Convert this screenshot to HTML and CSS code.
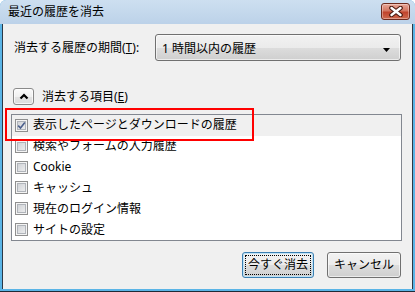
FILE: index.html
```html
<!DOCTYPE html>
<html lang="ja">
<head>
    <meta charset="UTF-8">
    <meta name="viewport" content="width=device-width, initial-scale=1.0">
    <title>最近の履歴を消去</title>

    <link rel="stylesheet" href="styles.css">
</head>
<body>
    <div class="window">
        <div class="titlebar">
            <span class="title">最近の履歴を消去</span>
            <button class="close">
                <svg width="14" height="11" viewBox="0 0 14 11">
                    <path d="M2.5 2 L11.5 9 M11.5 2 L2.5 9" stroke="#4a1a10" stroke-width="4.6" stroke-linecap="round"/>
                    <path d="M2.5 2 L11.5 9 M11.5 2 L2.5 9" stroke="#fff" stroke-width="2.4" stroke-linecap="round"/>
                </svg>
            </button>
        </div>
        <div class="client">
            <div class="period">
                <label>消去する履歴の期間(<u>T</u>):</label>
                <div class="combo">
                    <span>1 時間以内の履歴</span>
                    <svg class="arrow" width="7" height="4" viewBox="0 0 7 4"><path d="M0 0 H7 L3.5 4 Z" fill="#000"/></svg>
                </div>
            </div>
            <div class="items-head">
                <button class="expander">
                    <svg width="10" height="7" viewBox="0 0 10 7"><path d="M1.5 5.5 L5 2 L8.5 5.5" fill="none" stroke="#000" stroke-width="2.2"/></svg>
                </button>
                <span>消去する項目(<u>E</u>)</span>
            </div>
            <div class="list">
                <div class="row selected">
                    <span class="check">
                        <svg width="9" height="9" viewBox="0 0 9 9"><path d="M1.2 4.6 L3.5 7 L7.8 1.6" fill="none" stroke="#4b5f8c" stroke-width="1.6"/></svg>
                    </span>表示したページとダウンロードの履歴
                </div>
                <div class="row"><span class="check"></span>検索やフォームの入力履歴</div>
                <div class="row"><span class="check"></span>Cookie</div>
                <div class="row"><span class="check"></span>キャッシュ</div>
                <div class="row"><span class="check"></span>現在のログイン情報</div>
                <div class="row"><span class="check"></span>サイトの設定</div>
                <div class="highlight"></div>
            </div>
            <div class="footer">
                <button class="button default">今すぐ消去</button>
                <button class="button cancel">キャンセル</button>
            </div>
        </div>
    </div>
</body>
</html>
```

FILE: styles.css
```css
* {
    box-sizing: border-box;
}
body {
    margin: 0;
    background: #fff;
    font-family: "Noto Sans", "Noto Sans CJK JP", sans-serif;
    font-size: 12px;
    color: #000;
}
button {
    font-family: inherit;
    font-size: 12px;
    color: #000;
    margin: 0;
    padding: 0;
}
.window {
    width: 415px;
    height: 292px;
    display: flex;
    flex-direction: column;
    background: #5ab4e6;
    border-bottom: 1px solid #1f2a36;
    border-radius: 6px 6px 0 0;
}
.titlebar {
    height: 24px;
    flex: none;
    display: flex;
    align-items: center;
    padding: 0 5px 0 8px;
    background: linear-gradient(#cddff0, #bcd2e9);
    border-radius: 6px 6px 0 0;
}
.titlebar .title {
    line-height: 14px;
}
.titlebar .close {
    margin-left: auto;
    width: 29px;
    height: 17px;
    margin-top: -2px;
    display: flex;
    justify-content: center;
    align-items: center;
    border: 1px solid #6e2a1d;
    border-radius: 3px;
    background: linear-gradient(#e8a797, #d37661 45%, #c0432b 55%, #cf6a4f);
    box-shadow: inset 0 0 0 1px rgba(255, 255, 255, 0.35);
}
.client {
    flex: 1;
    margin: 0 2px 2px 2px;
    border-left: 1px solid #2b3846;
    border-right: 1px solid #2b3846;
    background: #f0f0f0;
    padding: 10px 10px 11px 8px;
    display: flex;
    flex-direction: column;
}
.period {
    height: 27px;
    display: flex;
    align-items: center;
    padding-left: 3px;
}
.period label {
    line-height: 14px;
}
.combo {
    width: 246px;
    height: 27px;
    margin-left: auto;
    margin-right: 1px;
    display: flex;
    align-items: center;
    padding: 0 10px 0 6px;
    border: 1px solid #707070;
    border-radius: 3px;
    background: linear-gradient(#f2f2f2, #ebebeb 50%, #dddddd 50%, #cfcfcf);
    box-shadow: inset 0 0 0 1px rgba(255, 255, 255, 0.6);
}
.combo .arrow {
    margin-left: auto;
    margin-top: 4px;
}
.items-head {
    margin-top: 27px;
    height: 17px;
    display: flex;
    align-items: center;
    padding-left: 2px;
}
.expander {
    width: 21px;
    height: 17px;
    display: flex;
    justify-content: center;
    align-items: center;
    border: 1px solid #8a8a8a;
    border-radius: 3px;
    background: linear-gradient(#fbfbfb, #f0f0f0 50%, #e3e3e3 50%, #dcdcdc);
    box-shadow: inset 0 0 0 1px rgba(255, 255, 255, 0.7);
}
.items-head span {
    margin-left: 8px;
    line-height: 14px;
}
.list {
    position: relative;
    margin-top: 9px;
    height: 127px;
    border: 1px solid #828790;
    background: #fff;
    display: flex;
    flex-direction: column;
}
.list .row {
    flex: 1;
    display: flex;
    align-items: center;
    padding-left: 3px;
    line-height: 14px;
}
.list .row.selected {
    background: #f0f0f0;
}
.check {
    width: 13px;
    height: 13px;
    flex: none;
    margin-right: 5px;
    display: flex;
    justify-content: center;
    align-items: center;
    border: 1px solid #8f8f8f;
    background: linear-gradient(135deg, #c9ccd1, #f3f3f3);
    box-shadow: inset 0 0 0 1px #f4f4f4, inset 0 0 0 2px #b0b4ba;
}
.highlight {
    position: absolute;
    left: -7px;
    top: -7px;
    width: 249px;
    height: 33px;
    border: 2px solid #f00;
}
.footer {
    margin-top: auto;
    margin-right: 1px;
    display: flex;
    justify-content: flex-end;
}
.button {
    height: 26px;
    border: 1px solid #707070;
    border-radius: 3px;
    background: linear-gradient(#f2f2f2, #ebebeb 50%, #dddddd 50%, #cfcfcf);
    box-shadow: inset 0 0 0 1px rgba(255, 255, 255, 0.6);
    line-height: 14px;
}
.button.default {
    width: 72px;
    border-color: #3c7fb1;
    box-shadow: inset 0 0 0 1px #bfe3f7;
    outline: 1px dotted #000;
    outline-offset: -4px;
}
.button.cancel {
    width: 74px;
    margin-left: 13px;
}
```
